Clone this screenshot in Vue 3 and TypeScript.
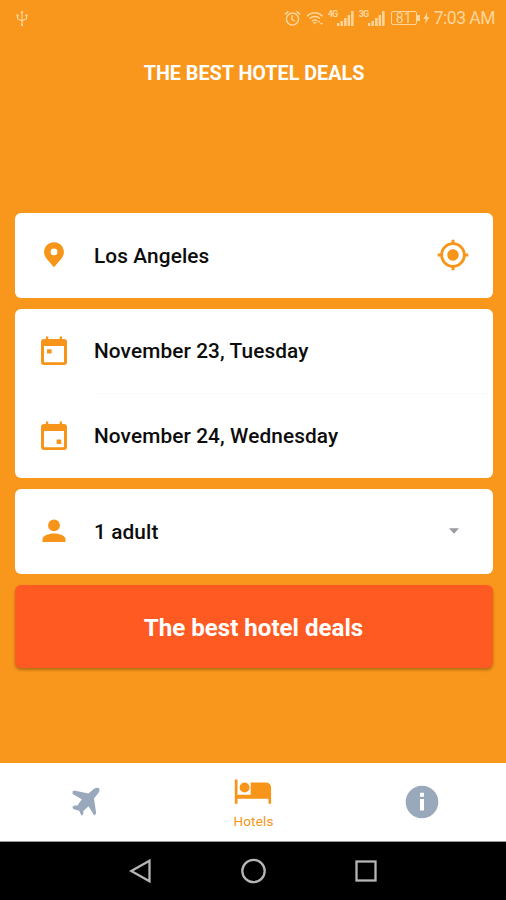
<script setup lang="ts">
interface StayDate {
  id: string
  label: string
  markX: number
  markY: number
}

const dates: StayDate[] = [
  { id: 'check-in', label: 'November 23, Tuesday', markX: 6, markY: 13.3 },
  { id: 'check-out', label: 'November 24, Wednesday', markX: 15.6, markY: 18.6 },
]
const networks: string[] = ['4G', '3G']
</script>

<template>
  <div class="screen">
    <header class="status">
      <svg class="usb" width="12" height="17" viewBox="0 0 12 17" fill="none" stroke="currentColor" stroke-width="1.2">
        <path d="M6 2v13M1.5 5v3.2c0 1.6 4.5 1.6 4.5 3.4M10.500 5v3.200c0 1.600-4.500 1.600-4.500 3.400" />
        <path d="M4.300 3L6 .6 7.700 3zM.5 4.500h2.200v1.800H.5zM9.300 4.500h2.200v1.800H9.300zM5 14h2v2H5z" fill="currentColor" stroke="none" />
      </svg>
      <svg class="alarm" width="17" height="17" viewBox="0 0 17 17" fill="none" stroke="currentColor" stroke-width="1.500">
        <circle cx="8.500" cy="9" r="6.100" />
        <path d="M8 5.300v4.200l2.800 1.700M.9 4.300l3.600-3M16.100 4.300l-3.600-3" />
      </svg>
      <svg class="wifi" width="18" height="15" viewBox="0 0 18 15" fill="none" stroke="currentColor" stroke-width="1.400">
        <path d="M1 5.200c4.500-4.600 11-4.600 15.500 0M3.500 7.700c3-3 7.500-3 10.500 0M6 10.200c1.700-1.600 3.800-1.600 5.300 0" />
        <path d="M8.700 13.500L6.800 11h3.800zM11.500 11.500l1.500-2 1.500 2zM14 12h3l-1.500 2z" fill="currentColor" stroke="none" />
      </svg>
      <div v-for="name in networks" :key="name" class="network">
        <span class="generation">{{ name }}</span>
        <svg width="17" height="15" viewBox="0 0 17 15" fill="currentColor">
          <path d="M0 12h2.300v3H0zM3.500 10h2.500v5H3.500zM7.100 7h2.500v8H7.100zM10.600 4h2.500v11h-2.500zM14.100 0h2.500v15h-2.500z" />
        </svg>
      </div>
      <div class="battery"><span>81</span></div>
      <svg class="bolt" width="7" height="12" viewBox="0 0 7 12" fill="currentColor"><path d="M4.300 0L.5 6.700h2.300L2 12l4.500-7H4z" /></svg>
      <span class="clock">7:03 AM</span>
    </header>

    <h1 class="title"><span>THE BEST HOTEL DEALS</span></h1>

    <main class="form">
      <section class="card">
        <div class="row">
          <svg class="lead" width="32" height="32" viewBox="0 0 32 32" fill="currentColor">
            <path fill-rule="evenodd" d="M16 3.300C10.300 3.300 6.100 7.600 6.100 13.200c0 4.800 4.300 8.500 9.900 15 5.600-6.500 9.900-10.200 9.900-15C25.900 7.600 21.700 3.300 16 3.300zM16 9.500a3.400 3.400 0 1 1 0 6.800 3.400 3.400 0 0 1 0-6.800z" />
          </svg>
          <span class="label city">Los Angeles</span>
          <svg class="locate" width="34" height="34" viewBox="0 0 24 24" fill="currentColor">
            <path d="M12 8c-2.210 0-4 1.790-4 4s1.790 4 4 4 4-1.790 4-4-1.790-4-4-4zm8.940 3c-.46-4.170-3.770-7.480-7.940-7.940V1.200h-2v1.860C6.830 3.520 3.520 6.830 3.060 11H1.200v2h1.860c.46 4.170 3.770 7.480 7.940 7.940v1.860h2v-1.860c4.170-.46 7.480-3.770 7.940-7.940h1.860v-2h-1.860zM12 19c-3.870 0-7-3.130-7-7s3.130-7 7-7 7 3.130 7 7-3.130 7-7 7z" />
          </svg>
        </div>
      </section>

      <section class="card">
        <div v-for="date in dates" :key="date.id" class="row">
          <svg class="lead" width="32" height="32" viewBox="-3 -1 32 32" fill="currentColor">
            <path fill-rule="evenodd" d="M3 3h2V.500h2.300V3h11.400V.500H21V3h2a3 3 0 0 1 3 3v20a3 3 0 0 1-3 3H3a3 3 0 0 1-3-3V6a3 3 0 0 1 3-3zM3 10v15.200c0 .7.300 1 1 1h18c.7 0 1-.3 1-1V10z" />
            <rect :x="date.markX" :y="date.markY" width="4.600" height="4.300" rx=".5" />
          </svg>
          <span class="label" :class="date.id">{{ date.label }}</span>
        </div>
      </section>

      <section class="card">
        <div class="row">
          <svg class="lead" width="32" height="32" viewBox="0 0 32 32" fill="currentColor">
            <circle cx="16" cy="10.400" r="5.900" />
            <path d="M4.500 27v-2.900c0-3.400 5.600-5.700 11.500-5.700s11.500 2.300 11.500 5.700V27z" />
          </svg>
          <span class="label guests">1 adult</span>
          <svg class="caret" width="10" height="6" viewBox="0 0 10 6" fill="currentColor"><path d="M0 .3h10L5 5.700z" /></svg>
        </div>
      </section>

      <button class="search" type="button"><span>The best hotel deals</span></button>
    </main>

    <nav class="tabs">
      <div class="tab">
        <svg class="flight" width="28" height="29" viewBox="0 0 28 29" fill="currentColor">
          <path d="M16.300 6.600L22.200 1.800C23.800.500 26.200.400 27 1.200s.700 3.200-.6 4.800L22 11.600l2.200 14.800-2 2.200-5.700-9.400-5.300 5 .2 2.700-1.900 1.800-2.300-5L1.200 21.900l-.8-2.100 1.900-1.400 3.100.2 4.400-6.300L.6 7V4.600l1.600-1z" />
        </svg>
      </div>
      <div class="tab active">
        <svg width="38" height="26" viewBox="0 0 38 26" fill="currentColor">
          <path d="M.8.500h2.700v15.300h13.200V3.500h15.400a5 5 0 0 1 5 5v16.300h-2.600V19.800H3.500v5H.8z" />
          <circle cx="10.600" cy="8.500" r="5" />
        </svg>
        <span>Hotels</span>
      </div>
      <div class="tab">
        <svg width="34" height="34" viewBox="0 0 34 34">
          <circle cx="17" cy="17" r="16.300" fill="currentColor" />
          <path d="M15 7.700h4v4h-4zM15 14h4v11.500h-4z" fill="#fff" />
        </svg>
      </div>
    </nav>

    <footer class="system">
      <svg width="24" height="26" viewBox="0 0 24 26"><path d="M3.300 13L21.500 2.700v20.600z" /></svg>
      <svg width="26" height="26" viewBox="0 0 26 26"><circle cx="12.500" cy="13" r="11.200" transform="translate(1)" /></svg>
      <svg width="24" height="26" viewBox="0 0 24 26"><rect x="2.500" y="3.500" width="19" height="19" /></svg>
    </footer>
  </div>
</template>

<style>
body {
  margin: 0;
}
</style>

<style scoped>
.screen {
  display: flex;
  flex-direction: column;
  width: 506px;
  height: 900px;
  overflow: hidden;
  background: #f8971c;
  color: #0c0c0c;
  font-family: Roboto, "Liberation Sans", sans-serif;
}

svg {
  display: block;
  flex: none;
}

.status {
  display: flex;
  align-items: center;
  box-sizing: border-box;
  height: 36px;
  padding: 0 11px 0 16px;
  color: #ffd59b;
}

.alarm {
  margin-left: auto;
}

.wifi {
  margin-left: 5px;
}

.network {
  display: flex;
  align-items: flex-start;
  margin-left: 4px;
}

.network + .network {
  margin-left: 5px;
}

.generation {
  width: 9px;
  font-size: 9px;
  line-height: 7px;
  font-weight: 700;
  letter-spacing: -0.8px;
}

.battery {
  position: relative;
  display: flex;
  align-items: center;
  justify-content: center;
  box-sizing: border-box;
  width: 26px;
  height: 14px;
  margin-left: 6px;
  border: 1px solid currentColor;
  border-radius: 2px;
  font-size: 14px;
  line-height: 12px;
}

.battery::after {
  position: absolute;
  right: -4px;
  top: 3px;
  width: 3px;
  height: 6px;
  background: currentColor;
  content: "";
}

.bolt {
  margin-left: 6px;
}

.clock {
  margin-left: 4px;
  font-size: 17.500px;
  line-height: 20px;
  letter-spacing: -0.500px;
  white-space: nowrap;
}

.title {
  margin: 27px 0 0 2px;
  color: #fff;
  font-size: 19.750px;
  line-height: 22px;
  font-weight: 700;
  text-align: center;
}

.form {
  display: flex;
  flex-direction: column;
  gap: 11px;
  margin: 128px 13.500px 0 14.500px;
}

.card {
  border-radius: 6px;
  background: #fff;
}

.row {
  display: flex;
  align-items: center;
  box-sizing: border-box;
  height: 84.700px;
  padding: 0 22.500px 0 23.500px;
}

.row + .row {
  background: linear-gradient(#fafafa, #fafafa) 80px 0 / 100% 1px no-repeat;
  border-radius: 6px;
}

.lead,
.locate {
  color: #f69519;
}

.label {
  margin-left: 24px;
  padding-top: 0.500px;
  font-size: 20.800px;
  line-height: 26px;
  font-weight: 500;
  letter-spacing: 0.110px;
  white-space: nowrap;
}

.locate {
  margin-left: auto;
}

.caret {
  margin: 0 11px 0 auto;
  color: #999ca1;
}

.search {
  height: 83px;
  padding: 3px 0 0;
  border: 0;
  border-radius: 6px;
  background: #ff5a22;
  box-shadow: 0 2px 3px rgb(90 60 0 / 45%);
  color: #fff;
  font: 700 24.100px/30px Roboto, "Liberation Sans", sans-serif;
}

.tabs {
  display: grid;
  grid-template-columns: repeat(3, 1fr);
  box-sizing: border-box;
  height: 79px;
  margin-top: auto;
  border-bottom: 1px solid #999;
  background: #fff;
  color: #9aa8bb;
}

.tab {
  display: flex;
  flex-direction: column;
  align-items: center;
  justify-content: center;
}

.flight {
  margin: -1px 0 0 3.400px;
}

.active {
  gap: 8px;
  padding: 3px 0 0 1px;
  color: #f69519;
  font-size: 13.500px;
  line-height: 16px;
  letter-spacing: 0.150px;
}

.system {
  display: flex;
  align-items: center;
  justify-content: center;
  gap: 88px;
  height: 58px;
  background: #000;
  fill: none;
  stroke: #b5b5b5;
  stroke-width: 2.300;
}
</style>
